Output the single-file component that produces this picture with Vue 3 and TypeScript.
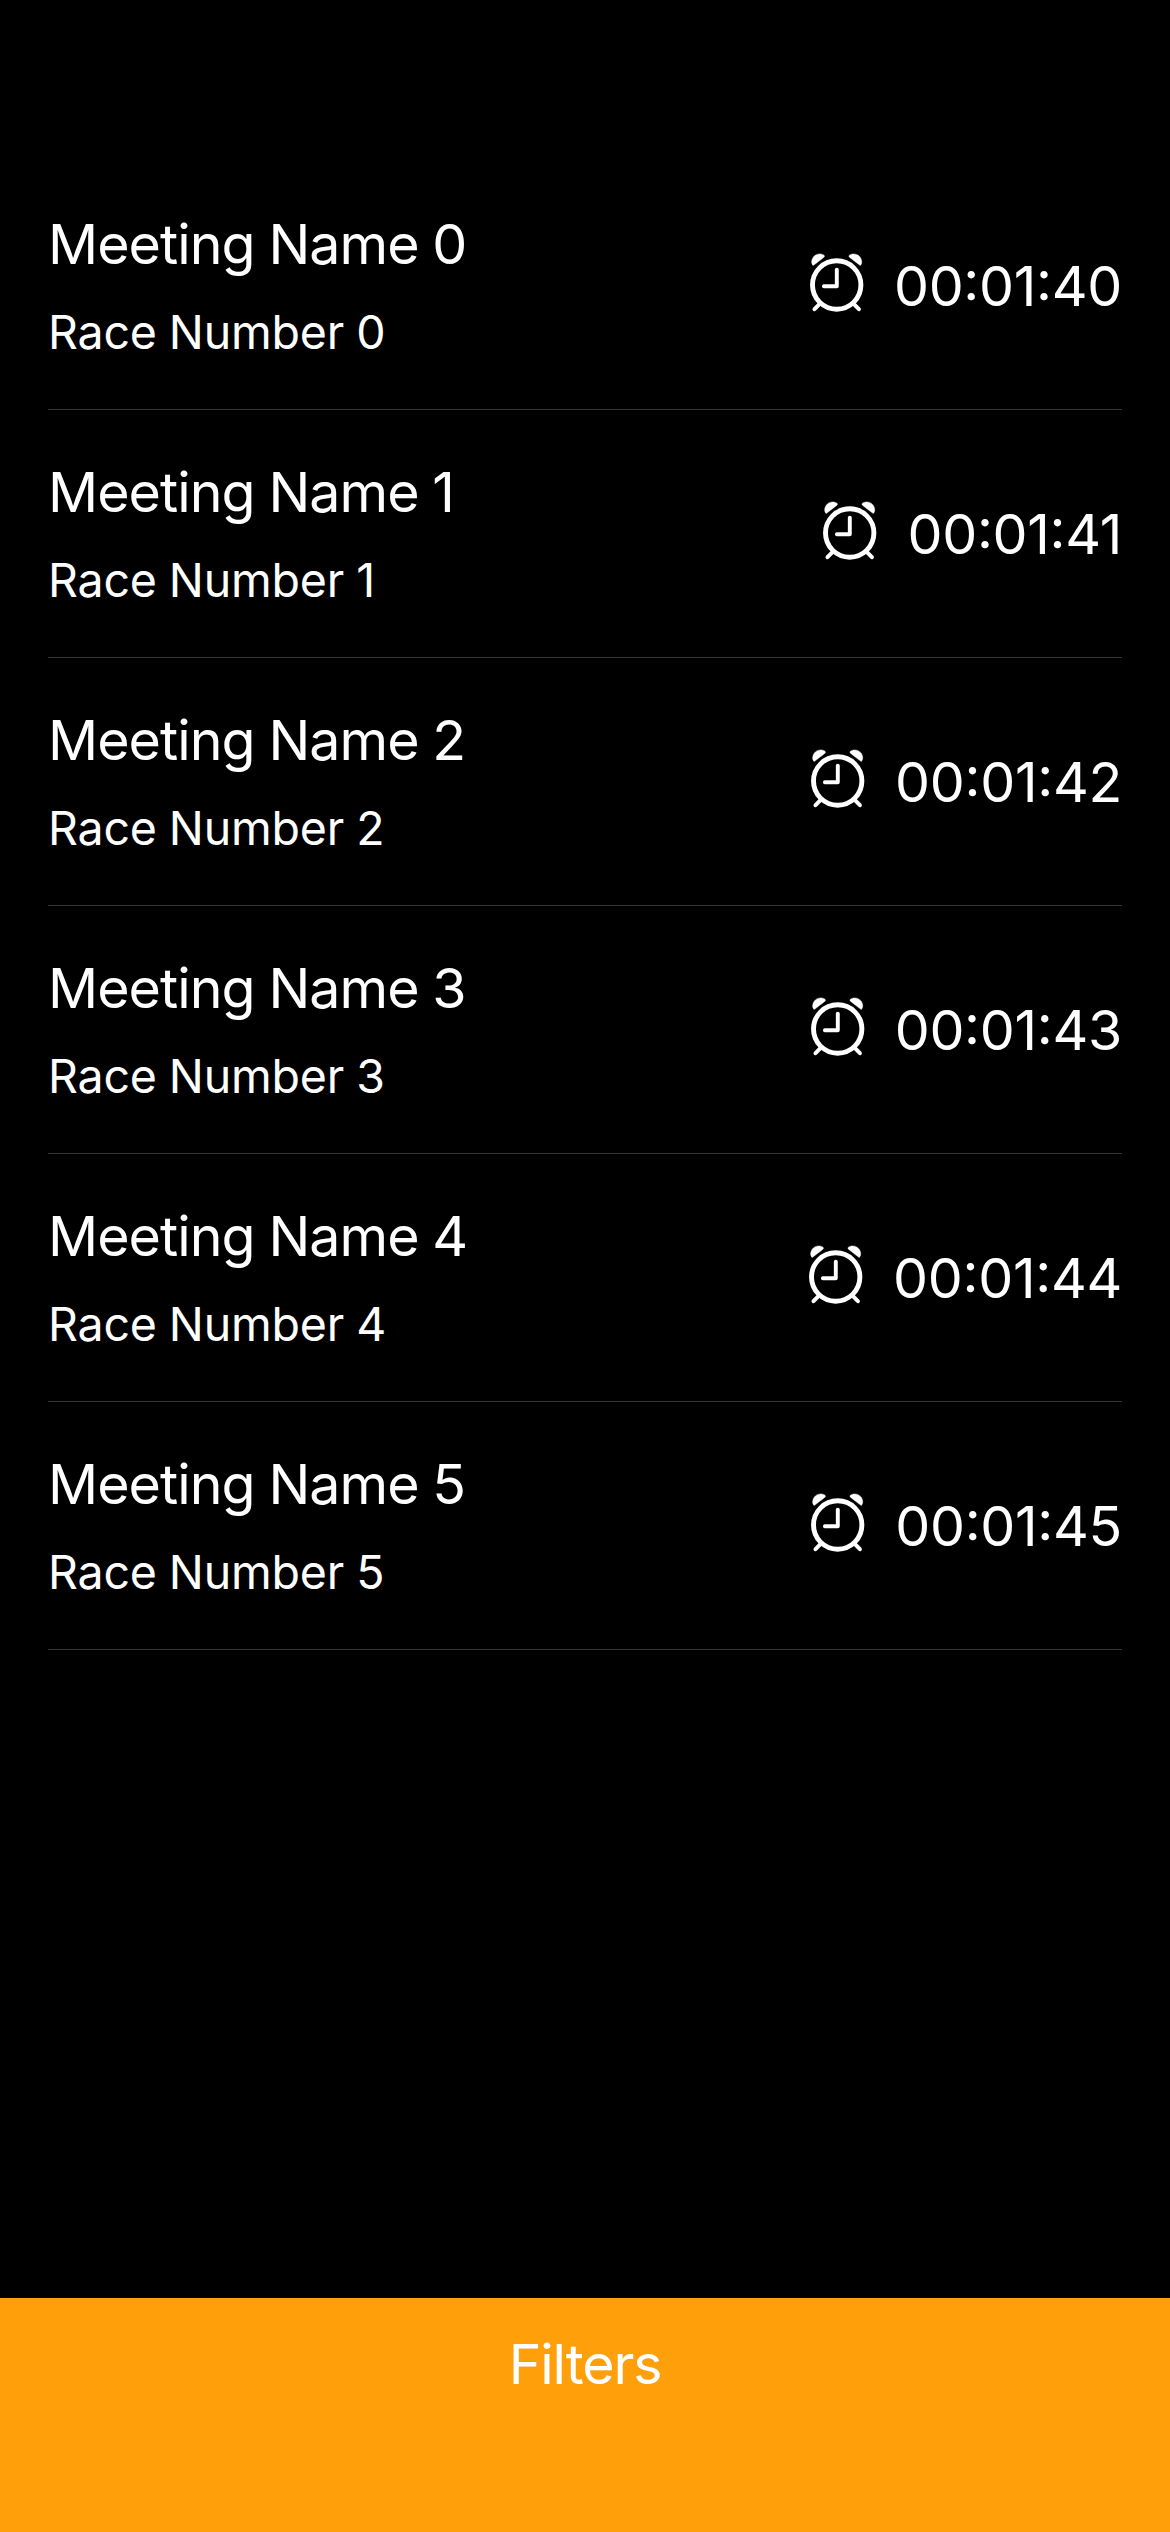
<script setup lang="ts">
interface Race {
  meeting: string
  race: string
  time: string
}

const races: Race[] = Array.from({ length: 6 }, (_, i) => ({
  meeting: `Meeting Name ${i}`,
  race: `Race Number ${i}`,
  time: `00:01:4${i}`,
}))
</script>

<template>
  <main class="screen">
    <ul class="list">
      <li v-for="r in races" :key="r.meeting" class="row">
        <div class="info">
          <div class="meeting">{{ r.meeting }}</div>
          <div class="race">{{ r.race }}</div>
        </div>
        <div class="timer">
          <svg class="alarm" viewBox="0 0 60 66" fill="none" stroke="#fff" stroke-linecap="round" stroke-linejoin="round">
            <circle cx="29.7" cy="33" r="24.2" stroke-width="4.9" />
            <path d="M29.8 17.6v16.6H16.9" stroke-width="3.9" />
            <path d="M13.2 51.3l-5.7 5.9M46.2 51.3l5.7 5.9" stroke-width="4" />
            <path
              d="M6 13.2C3.9 11.6 4.4 7.5 6.4 4.9C9.2 1.4 14.4 1 17.2 3.4Q18 4.5 16.7 5.4L8.2 12.1Q6.8 13.5 6 13.2ZM53.4 13.2C55.5 11.6 55 7.5 53 4.9C50.2 1.4 45 1 42.2 3.4Q41.4 4.5 42.7 5.4L51.2 12.1Q52.6 13.5 53.4 13.2Z"
              fill="#fff"
              stroke="#fff"
              stroke-width="0.4"
            />
          </svg>
          <span class="time">{{ r.time }}</span>
        </div>
      </li>
    </ul>
    <button class="filters" type="button">Filters</button>
  </main>
</template>

<style scoped>
.screen {
  width: 1170px;
  height: 2532px;
  background: #000;
  color: #fff;
  display: flex;
  flex-direction: column;
  font-family: Inter, sans-serif;
}
.list {
  list-style: none;
  margin: 0;
  padding: 162px 48px 0;
  flex: 1;
}
.row {
  height: 248px;
  box-sizing: border-box;
  border-bottom: 1px solid #363638;
  display: flex;
  justify-content: space-between;
  align-items: center;
}
.meeting {
  font-size: 55.5px;
  line-height: 68px;
  letter-spacing: -0.95px;
  word-spacing: -0.9px;
}
.race {
  font-size: 46.5px;
  line-height: 58px;
  letter-spacing: -0.2px;
  word-spacing: -0.7px;
  margin-top: 25px;
}
.timer {
  display: flex;
  align-items: center;
  gap: 27px;
}
.alarm {
  width: 60px;
  height: 66px;
  margin-bottom: 1px;
}
.time {
  font-size: 55.5px;
  line-height: 68px;
  letter-spacing: -0.3px;
  font-feature-settings: "case" 1;
}
.filters {
  border: 0;
  height: 234px;
  background: #ff9f0a;
  color: #fff;
  font: 55.5px/68px Inter, sans-serif;
  letter-spacing: -1.15px;
  padding: 32px 0 0;
  display: flex;
  justify-content: center;
  align-items: flex-start;
}
</style>
